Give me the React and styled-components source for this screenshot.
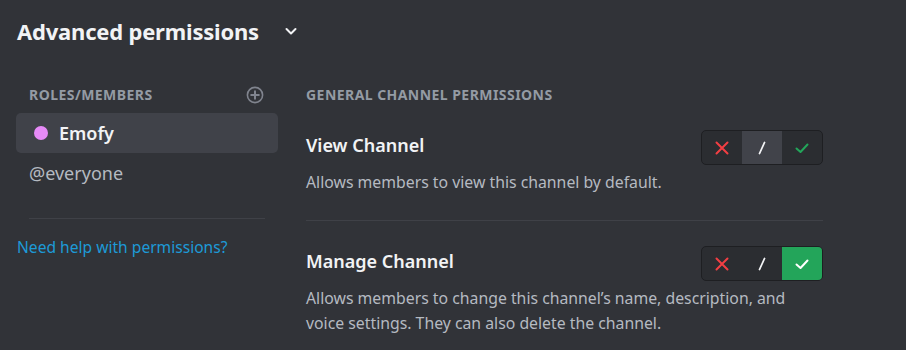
import React from "react";
import styled, { createGlobalStyle } from "styled-components";

const Global = createGlobalStyle`
  html, body { margin: 0; padding: 0; background: #313338; }
  body { font-family: "Noto Sans", "Open Sans", sans-serif; color: #dbdee1; }
  * { box-sizing: border-box; }
`;

const Page = styled.div`
  width: 906px;
  height: 350px;
  overflow: hidden;
  background: #313338;
  padding: 14px 0 0 17px;
`;

const Header = styled.div`
  display: flex;
  align-items: center;
  gap: 24px;
  height: 34px;
`;

const Title = styled.h1`
  margin: 0;
  font-size: 22px;
  font-weight: 700;
  color: #f2f3f5;
  letter-spacing: -0.2px;
`;

const Body = styled.div`
  display: grid;
  grid-template-columns: 262px 517px;
  column-gap: 28px;
  margin-top: 37px;
  margin-left: -1px;
`;

const Sidebar = styled.div`
  display: flex;
  flex-direction: column;
`;

const SideHeader = styled.div`
  display: flex;
  align-items: center;
  justify-content: space-between;
  padding: 0 14px 0 13px;
  height: 20px;
`;

const Label = styled.div`
  font-size: 14px;
  font-weight: 700;
  text-transform: uppercase;
  color: #949ba4;
  letter-spacing: 0.45px;
  line-height: 20px;
`;

const RoleItem = styled.div`
  display: flex;
  align-items: center;
  gap: 11px;
  height: 40px;
  margin-top: ${(p) => (p.$first ? "8px" : "0")};
  padding: 0 13px 0 ${(p) => (p.$dot ? "18px" : "13px")};
  border-radius: 5px;
  background: ${(p) => (p.$selected ? "#404249" : "transparent")};
  color: ${(p) => (p.$selected ? "#f2f3f5" : "#b5bac1")};
  font-size: 18px;
  font-weight: ${(p) => (p.$selected ? 600 : 400)};
`;

const Dot = styled.span`
  width: 14px;
  height: 14px;
  border-radius: 50%;
  background: ${(p) => p.$color};
`;

const SideDivider = styled.div`
  height: 1px;
  background: #3f4147;
  margin: 25px 13px 0 13px;
`;

const HelpLink = styled.a`
  margin-top: 17px;
  margin-left: 1px;
  font-size: 15.6px;
  color: #1d9ad7;
  text-decoration: none;
`;

const Main = styled.div`
  display: flex;
  flex-direction: column;
`;

const Permission = styled.div`
  display: flex;
  flex-direction: column;
  padding: ${(p) => p.$pad};
  border-bottom: ${(p) => (p.$divider ? "1px solid #3f4147" : "none")};
`;

const PermRow = styled.div`
  display: flex;
  align-items: flex-start;
  justify-content: space-between;
`;

const PermName = styled.div`
  font-size: 18px;
  font-weight: 600;
  line-height: 30px;
  color: #f2f3f5;
`;

const PermDesc = styled.div`
  margin-top: 5px;
  font-size: 15.8px;
  line-height: 25px;
  color: #b5bac1;
  max-width: 490px;
`;

const Toggle = styled.div`
  display: flex;
  height: 35px;
  border: 1px solid #1e1f22;
  border-radius: 5px;
  background: #2b2d31;
  overflow: hidden;
`;

const Seg = styled.div`
  width: 40px;
  display: flex;
  align-items: center;
  justify-content: center;
  background: ${(p) => p.$bg || "transparent"};
`;

const XIcon = ({ color = "#f23f43" }) => (
  <svg width="16" height="16" viewBox="0 0 16 16">
    <path d="M2.5 2.5 L13.5 13.5 M13.5 2.5 L2.5 13.5" stroke={color} strokeWidth="2" strokeLinecap="round" />
  </svg>
);

const SlashIcon = () => (
  <svg width="16" height="16" viewBox="0 0 16 16">
    <path d="M10.5 2.5 L5.5 13.5" stroke="#f2f3f5" strokeWidth="1.8" strokeLinecap="round" />
  </svg>
);

const CheckIcon = ({ color }) => (
  <svg width="16" height="16" viewBox="0 0 16 16">
    <path d="M2.5 8.5 L6.5 12 L13.5 4.5" stroke={color} strokeWidth="2" fill="none" strokeLinecap="round" strokeLinejoin="round" />
  </svg>
);

const PlusCircle = () => (
  <svg width="18" height="18" viewBox="0 0 18 18">
    <circle cx="9" cy="9" r="7.6" stroke="#80848e" strokeWidth="1.6" fill="none" />
    <path d="M9 5.2 V12.8 M5.2 9 H12.8" stroke="#80848e" strokeWidth="2" strokeLinecap="round" />
  </svg>
);

const Chevron = () => (
  <svg width="16" height="16" viewBox="0 0 16 16">
    <path d="M3.5 6 L8 10.5 L12.5 6" stroke="#f2f3f5" strokeWidth="2" fill="none" strokeLinecap="round" strokeLinejoin="round" />
  </svg>
);

const TriToggle = ({ state }) => (
  <Toggle>
    <Seg $bg={state === "deny" ? "#da373c" : undefined}>
      <XIcon color={state === "deny" ? "#fff" : "#f23f43"} />
    </Seg>
    <Seg $bg={state === "neutral" ? "#41434a" : undefined}>
      <SlashIcon />
    </Seg>
    <Seg $bg={state === "allow" ? "#23a55a" : undefined}>
      <CheckIcon color={state === "allow" ? "#fff" : "#23a55a"} />
    </Seg>
  </Toggle>
);

export default function App() {
  return (
    <Page>
      <Global />
      <Header>
        <Title>Advanced permissions</Title>
        <Chevron />
      </Header>
      <Body>
        <Sidebar>
          <SideHeader>
            <Label>Roles/Members</Label>
            <PlusCircle />
          </SideHeader>
          <RoleItem $first $selected $dot>
            <Dot $color="#e68af7" />
            Emofy
          </RoleItem>
          <RoleItem>@everyone</RoleItem>
          <SideDivider />
          <HelpLink href="#">Need help with permissions?</HelpLink>
        </Sidebar>
        <Main>
          <Label>General Channel Permissions</Label>
          <Permission $divider $pad="25px 0 25px 0">
            <PermRow>
              <PermName>View Channel</PermName>
              <TriToggle state="neutral" />
            </PermRow>
            <PermDesc>Allows members to view this channel by default.</PermDesc>
          </Permission>
          <Permission $pad="25px 0 0 0">
            <PermRow>
              <PermName>Manage Channel</PermName>
              <TriToggle state="allow" />
            </PermRow>
            <PermDesc>
              Allows members to change this channel’s name, description, and voice settings. They can also delete the channel.
            </PermDesc>
          </Permission>
        </Main>
      </Body>
    </Page>
  );
}
